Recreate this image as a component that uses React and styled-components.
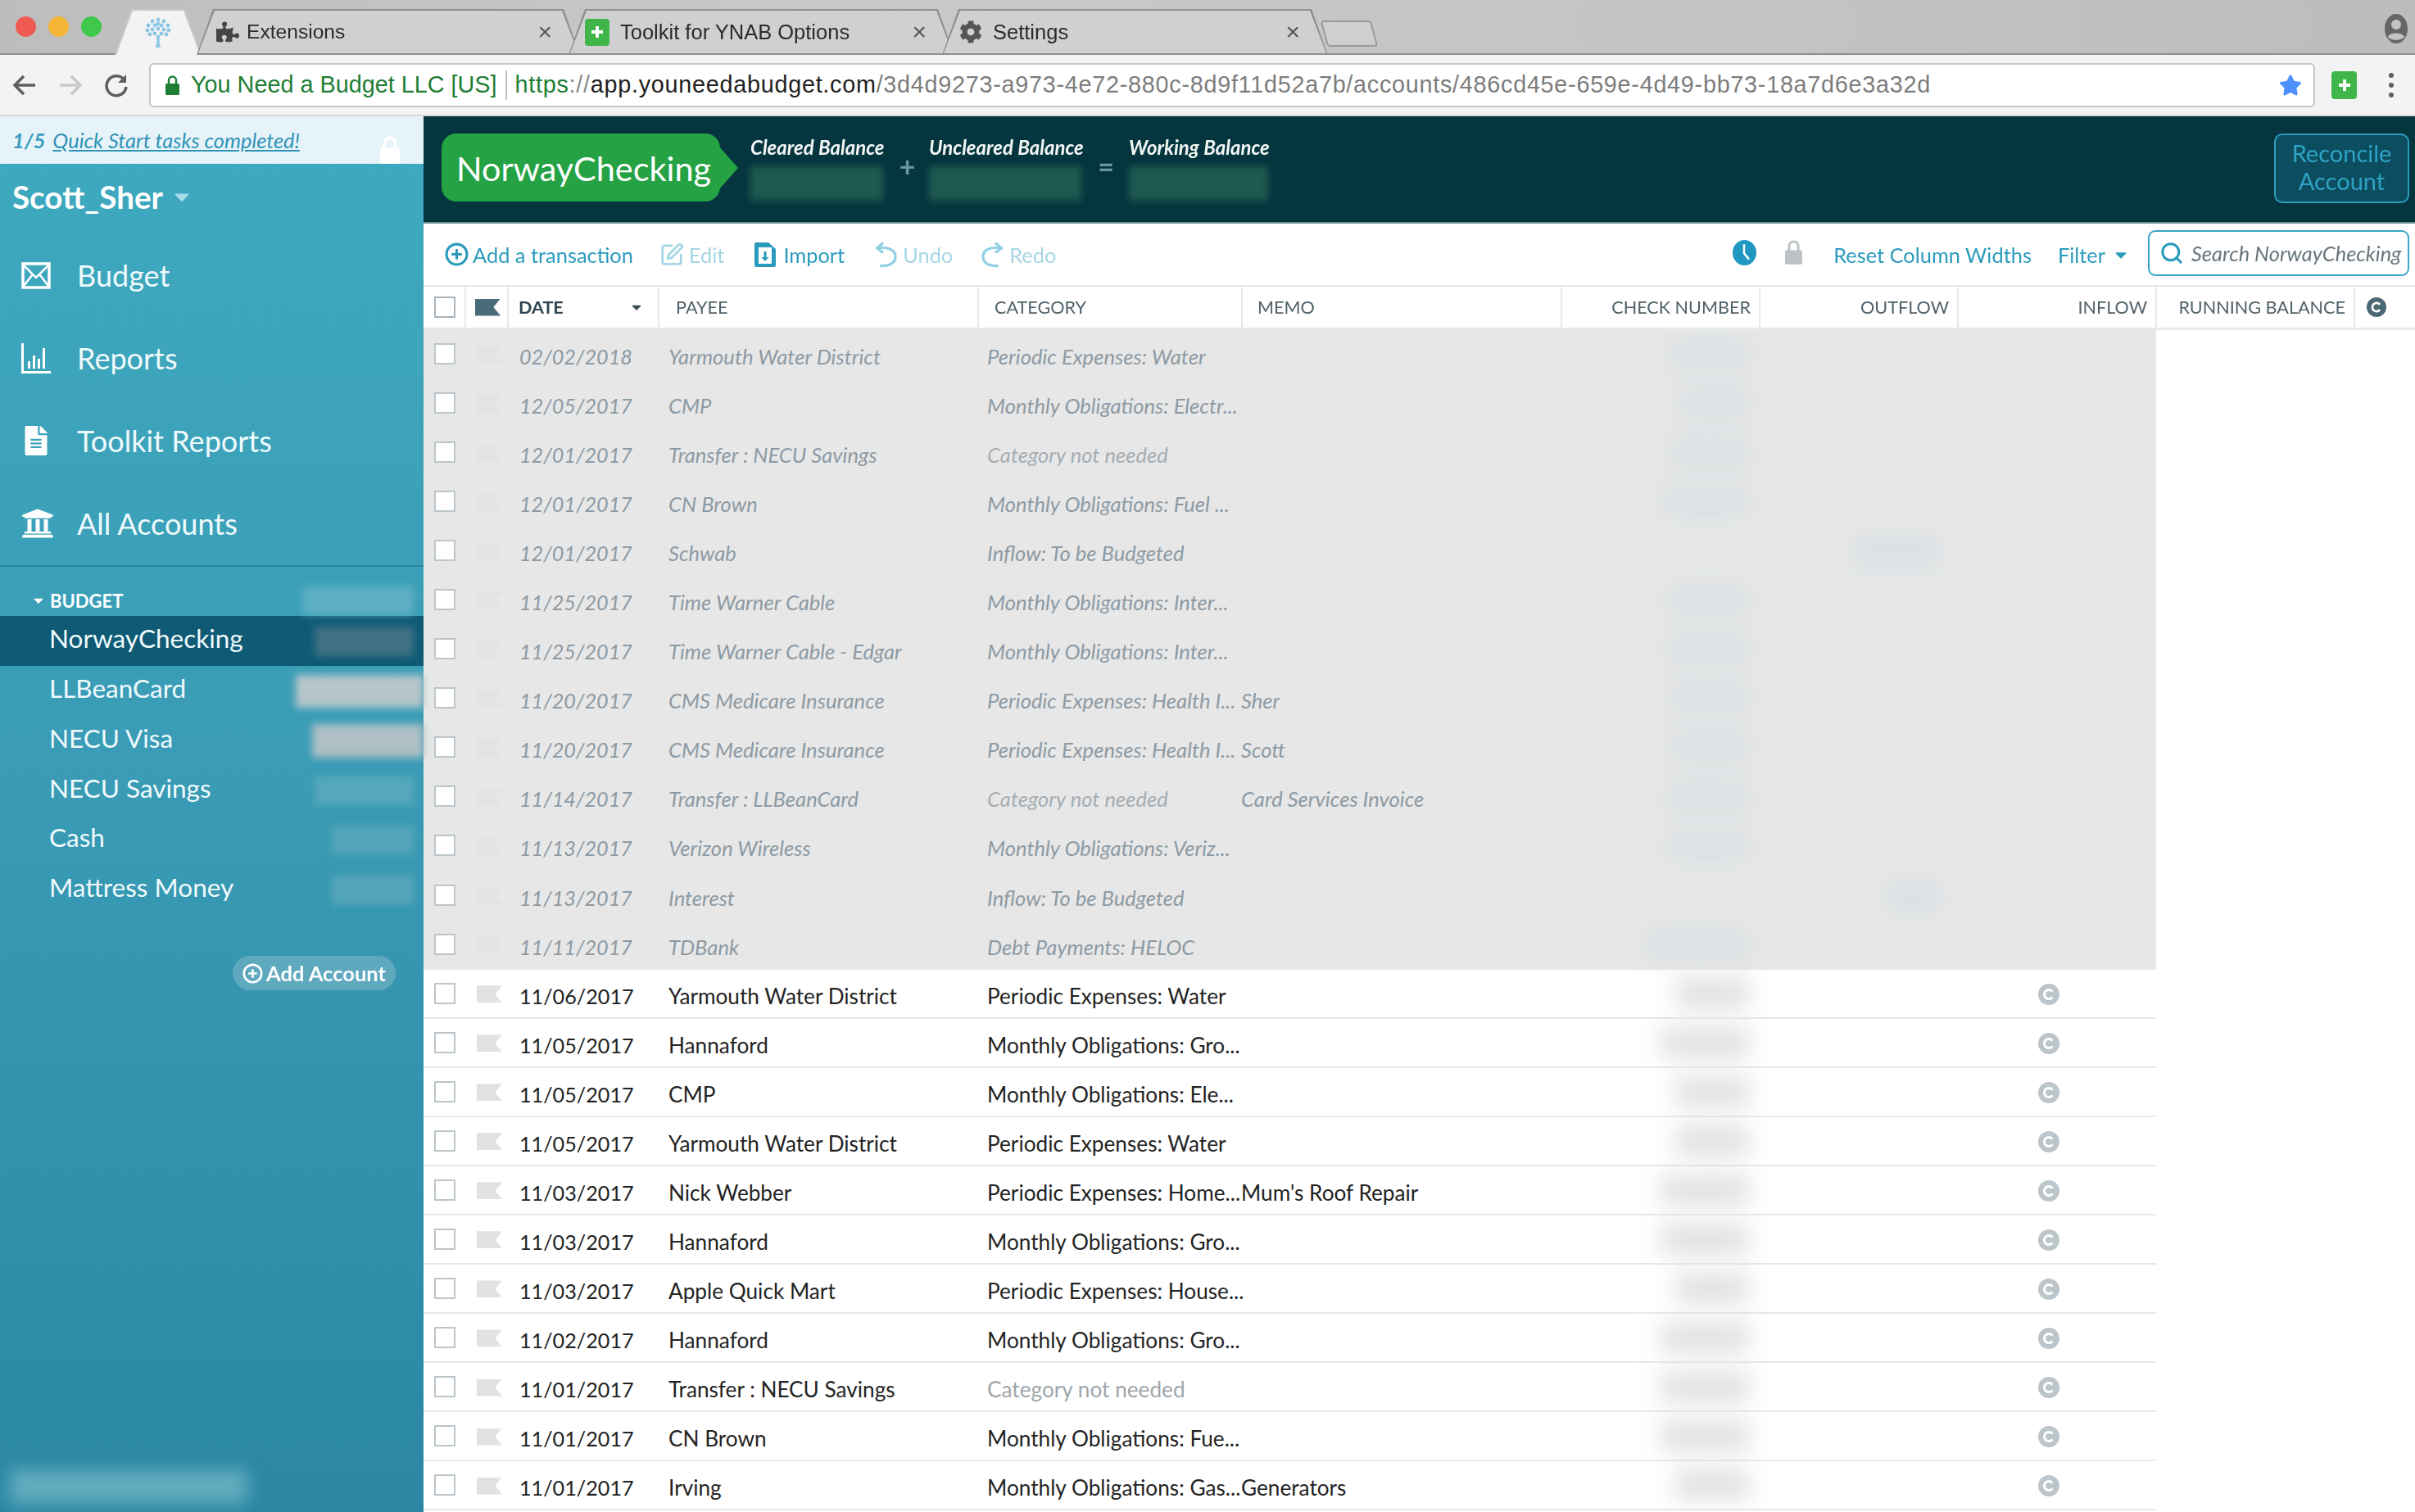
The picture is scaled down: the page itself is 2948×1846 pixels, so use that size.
import React from 'react';
import styled, { createGlobalStyle } from 'styled-components';
import { FaPuzzlePiece, FaCog, FaUniversity, FaStar, FaFileAlt, FaCaretDown } from 'react-icons/fa';
import { Search, SquarePen } from 'lucide-react';

const GlobalStyle = createGlobalStyle`
  html, body {
    margin: 0;
    padding: 0;
    width: 2948px;
    height: 1846px;
    overflow: hidden;
    background: #ffffff;
    font-family: Lato, "Open Sans", sans-serif;
  }
  * { box-sizing: border-box; }
`;

const Page = styled.div`
  width: 2948px;
  height: 1846px;
  display: flex;
  flex-direction: column;
  overflow: hidden;
  filter: blur(0.6px);
`;

/* browser chrome */
const TabStrip = styled.div`
  height: 67px;
  flex: none;
  display: flex;
  align-items: flex-end;
  padding-left: 140px;
  background: linear-gradient(90deg, #bdbdbd 0%, #c9c9c9 35%, #c4c4c4 70%, #bcbcbc 100%);
  border-bottom: 2px solid #8e8e8e;
  position: relative;
`;

const Lights = styled.div`
  position: absolute;
  left: 19px;
  top: 20px;
  display: flex;
  gap: 15px;
`;

const Light = styled.span`
  width: 25px;
  height: 25px;
  border-radius: 50%;
  background: ${({ $color }) => $color};
`;

const TabShell = styled.div`
  width: ${({ $width }) => $width}px;
  height: 56px;
  margin-left: ${({ $overlap }) => $overlap || 0}px;
  margin-bottom: -2px;
  flex: none;
  background: ${({ $active }) => ($active ? '#c8c8c8' : '#8e8e8e')};
  clip-path: polygon(0 100%, 20px 0, calc(100% - 20px) 0, 100% 100%);
  padding: 2px 2px 0;
`;

const TabFace = styled.div`
  width: 100%;
  height: 100%;
  display: flex;
  align-items: center;
  padding: 0 32px 0 ${({ $pad }) => $pad || 22}px;
  background: ${({ $active }) => ($active ? '#f3f3f3' : '#d0d0d0')};
  clip-path: polygon(0 100%, 20px 0, calc(100% - 20px) 0, 100% 100%);
  ${({ $active }) => !$active && 'height: calc(100% - 2px);'}
`;

const TabTitle = styled.span`
  flex: 1;
  margin-left: ${({ $gap }) => $gap || 13}px;
  font: ${({ $size }) => $size || 25.5}px "Liberation Sans", Arial, sans-serif;
  color: #2b2b2b;
  white-space: nowrap;
`;

const TabClose = styled.span`
  font: 30px "Liberation Sans", Arial, sans-serif;
  color: #555555;
`;

const NewTab = styled.div`
  width: 62px;
  height: 32px;
  margin-left: -5px;
  margin-bottom: 8px;
  flex: none;
  background: #cfcfcf;
  border: 2px solid #9a9a9a;
  border-radius: 4px;
  transform: skewX(15deg);
`;

const Profile = styled.div`
  position: absolute;
  right: 8px;
  top: 16px;
  color: #666666;
  line-height: 0;
`;

const PlusBadge = styled.span`
  width: ${({ $size }) => $size}px;
  height: ${({ $size }) => $size + 3}px;
  flex: none;
  display: inline-flex;
  align-items: center;
  justify-content: center;
  background: #3fb54a;
  border-radius: 4px;
`;

const AddressRow = styled.div`
  height: 75px;
  flex: none;
  display: flex;
  align-items: center;
  background: #f3f3f3;
  border-bottom: 2px solid #d8d8d8;
  padding: 0 0 0 15px;
`;

const NavArrows = styled.div`
  width: 167px;
  flex: none;
  display: flex;
  gap: 26px;
  align-items: center;
  line-height: 0;
`;

const Omnibox = styled.div`
  width: 2644px;
  height: 54px;
  flex: none;
  display: flex;
  align-items: center;
  padding: 0 14px 0 18px;
  background: #ffffff;
  border: 2px solid #c6c6c6;
  border-radius: 6px;
  font: 28.8px "Liberation Sans", Arial, sans-serif;
  white-space: nowrap;
`;

const SiteName = styled.span`
  margin-left: 14px;
  color: #1e7e34;
`;

const UrlPart = styled.span`
  color: ${({ $color }) => $color};
  letter-spacing: 0.72px;
`;

const OmniDivider = styled.span`
  width: 2px;
  height: 36px;
  margin: 0 10px;
  background: #c4c4c4;
`;

const ToolbarEnd = styled.div`
  flex: 1;
  display: flex;
  align-items: center;
  gap: 39px;
  padding-left: 20px;
`;

const Kebab = styled.span`
  display: flex;
  flex-direction: column;
  gap: 6px;

  i {
    width: 6px;
    height: 6px;
    border-radius: 50%;
    background: #5e5e5e;
  }
`;

/* app shell */
const AppBody = styled.div`
  flex: 1;
  min-height: 0;
  display: flex;
`;

const Sidebar = styled.aside`
  width: 517px;
  flex: none;
  display: flex;
  flex-direction: column;
  background: linear-gradient(180deg, #3eaabf 0%, #3a9cb6 45%, #2b87a4 100%);
  color: #ffffff;
`;

const QuickStart = styled.div`
  height: 58px;
  flex: none;
  display: flex;
  align-items: center;
  padding-left: 15px;
  position: relative;
  background: #e6f4f9;
  font: italic 700 25.4px Lato, sans-serif;
  color: #3b9cc0;
`;

const QuickLink = styled.a`
  margin-left: 9px;
  color: #2f93b8;
  font-weight: 400;
  text-decoration: underline;
`;

const QuickLock = styled.span`
  position: absolute;
  left: 464px;
  top: 24px;
  line-height: 0;
`;

const BudgetName = styled.div`
  height: 86px;
  flex: none;
  display: flex;
  align-items: center;
  gap: 9px;
  padding: 0 0 6px 15px;
  font: 700 38.6px Lato, sans-serif;

  svg {
    color: #a8dbe8;
  }
`;

const MainNav = styled.nav`
  flex: none;
  padding-bottom: 1px;
  border-bottom: 2px solid rgba(20, 90, 115, 0.35);
`;

const NavItem = styled.div`
  height: 100.8px;
  display: flex;
  align-items: center;
  padding-left: 26px;
  font: 36px Lato, sans-serif;
  color: #eefafc;
`;

const NavIcon = styled.span`
  width: 68px;
  flex: none;
  line-height: 0;
`;

const AccountHeader = styled.div`
  height: 60px;
  flex: none;
  display: flex;
  align-items: center;
  padding: 22px 12px 0 38px;
  font: 700 22px Lato, sans-serif;

  svg {
    margin-right: 5px;
  }
`;

const AccountRow = styled.div`
  height: ${({ $selected }) => ($selected ? 61 : 60.8)}px;
  flex: none;
  display: flex;
  align-items: center;
  justify-content: space-between;
  padding: 0 ${({ $end }) => $end}px 0 60px;
  font: 31.5px Lato, sans-serif;
  color: #f0fafc;
  background: ${({ $selected }) => ($selected ? '#0f5a75' : 'transparent')};
`;

const AccountName = styled.span`
  margin-bottom: 7px;
`;

const Smudge = styled.span`
  display: block;
  flex: none;
  width: ${({ $w }) => $w}px;
  height: ${({ $h }) => $h || 34}px;
  margin-left: ${({ $left }) => $left || 0}px;
  background: ${({ $color }) => $color};
  filter: blur(${({ $blur }) => $blur || 5}px);
`;

const AddAccount = styled.button`
  align-self: flex-end;
  width: 199px;
  height: 42px;
  margin: 50px 34px 0 0;
  padding: 0;
  display: flex;
  align-items: center;
  justify-content: center;
  gap: 4px;
  border: 0;
  border-radius: 21px;
  background: #5fa9bf;
  color: #ffffff;
  font: 700 25.5px Lato, sans-serif;
`;

const SidebarFooter = styled.div`
  margin-top: auto;
  padding: 0 0 10px 12px;
`;

const Content = styled.main`
  flex: 1;
  min-width: 0;
  display: flex;
  flex-direction: column;
`;

const AccountHead = styled.header`
  height: 131px;
  flex: none;
  display: flex;
  align-items: flex-start;
  padding: 21px 7px 0 22px;
  background: #05353f;
  border-bottom: 2px solid #6b8f97;
`;

const AccountPill = styled.div`
  width: 340px;
  height: 83px;
  flex: none;
  position: relative;
  display: flex;
  align-items: center;
  padding-left: 18px;
  margin-right: 37px;
  background: #25a244;
  border-radius: 18px;
  color: #ffffff;
  font: 41.4px Lato, sans-serif;
  white-space: nowrap;

  &::after {
    content: '';
    position: absolute;
    right: -22px;
    top: 16px;
    border-left: 23px solid #25a244;
    border-top: 26px solid transparent;
    border-bottom: 26px solid transparent;
  }
`;

const Balance = styled.div`
  width: ${({ $w }) => $w}px;
  flex: none;
  display: flex;
  flex-direction: column;
  gap: 7px;
  padding-top: 1px;
`;

const BalanceLabel = styled.div`
  font: italic 700 24px/32px Lato, sans-serif;
  color: #f2f7f5;
  white-space: nowrap;
`;

const BalanceOp = styled.div`
  width: ${({ $w }) => $w}px;
  flex: none;
  padding-top: 19px;
  text-align: center;
  font: 700 34px Lato, sans-serif;
  color: #6c95a6;
`;

const Reconcile = styled.button`
  width: 165px;
  height: 85px;
  margin-left: auto;
  padding: 0 0 3px;
  background: #0d4d60;
  border: 2px solid #2a9dbd;
  border-radius: 10px;
  color: #2ea3c4;
  font: 29px/34px Lato, sans-serif;
`;

const ActionBar = styled.div`
  height: 75px;
  flex: none;
  display: flex;
  align-items: center;
  padding: 0 7px 0 26px;
`;

const Action = styled.span`
  display: flex;
  align-items: center;
  gap: ${({ $gap }) => $gap || 6}px;
  margin-right: ${({ $mr }) => $mr || 0}px;
  font: 25.4px Lato, sans-serif;
  color: ${({ $dim }) => ($dim ? '#a6d6e4' : '#2b9bbd')};
  white-space: nowrap;
  line-height: 0;

  span {
    line-height: 34px;
  }
`;

const ActionIcon = styled.span`
  margin-right: ${({ $mr }) => $mr || 0}px;
  margin-top: -5px;
  line-height: 0;
`;

const MirroredIcon = styled.svg`
  transform: ${({ $flip }) => ($flip ? 'scaleX(-1)' : 'none')};
`;

const SearchBox = styled.div`
  width: 319px;
  height: 56px;
  flex: none;
  display: flex;
  align-items: center;
  gap: 9px;
  margin-top: -4px;
  padding-left: 12px;
  border: 2px solid #3aa5c5;
  border-radius: 9px;
  font: italic 25.4px Lato, sans-serif;
  color: #67757c;
  white-space: nowrap;

  svg {
    color: #2b9bbd;
    flex: none;
  }
`;

const Spacer = styled.span`
  flex: 1;
`;

const HeadRow = styled.div`
  height: 55px;
  flex: none;
  display: grid;
  grid-template-columns: 52px 52px 184px 390px 322px 390px 242px 242px 242px 242px 73px;
  border-top: 2px solid #e4e9ed;
  border-bottom: 3px solid #e6eaec;
`;

const HeadCell = styled.div`
  display: flex;
  align-items: center;
  justify-content: ${({ $right }) => ($right ? 'flex-end' : 'flex-start')};
  padding: 0 ${({ $right }) => ($right ? 10 : 8)}px 0 ${({ $pad }) => $pad ?? 18}px;
  border-right: ${({ $last }) => ($last ? 0 : '2px solid #e4e9ed')};
  font: ${({ $strong }) => ($strong ? 700 : 400)} 21.6px Lato, sans-serif;
  color: ${({ $strong }) => ($strong ? '#2e4651' : '#52626a')};
  white-space: nowrap;
`;

const Check = styled.span`
  width: 26px;
  height: 26px;
  flex: none;
  margin-left: 13px;
  background: #ffffff;
  border: 2px solid ${({ $dark }) => ($dark ? '#aab4ba' : '#bcc5ca')};
`;

const FlagShape = styled.span`
  width: 31px;
  height: 21px;
  flex: none;
  display: block;
  margin: ${({ $drop }) => $drop || 0}px 0 0 ${({ $left }) => $left}px;
  background: ${({ $color }) => $color};
  clip-path: polygon(0 0, 100% 0, 72% 50%, 100% 100%, 0 100%);
`;

const SortCaret = styled.span`
  margin-left: auto;
  margin-right: 9px;
  color: #3b4d55;
  line-height: 0;
`;

const Rows = styled.div`
  flex: 1;
  min-height: 0;
  width: 2115px;
  overflow: hidden;
`;

const Row = styled.div`
  height: 60.05px;
  display: grid;
  grid-template-columns: 52px 61px 182px 389px 310px 396px 242px 1fr;
  align-items: center;
  background: ${({ $future }) => ($future ? '#e7e7e7' : '#ffffff')};
  border-bottom: 2px solid #e4e9ee;
  font: ${({ $future }) => ($future ? 'italic 25.6px' : 'normal 26.2px')} Lato, sans-serif;
  color: ${({ $future }) => ($future ? '#8d9aa4' : '#232323')};
`;

const Cell = styled.div`
  padding: 6px 0 0 4px;
  white-space: nowrap;
  color: ${({ $muted, $future }) => ($muted ? ($future ? '#a5adb3' : '#9ea5a9') : 'inherit')};
`;

const DateCell = styled(Cell)`
  font-size: 25.2px;
`;

const BoxCell = styled.div`
  display: flex;
  align-items: center;
`;

const AmountCell = styled.div`
  display: flex;
  align-items: center;
  justify-content: flex-end;
  padding-right: ${({ $end }) => $end}px;
`;

const InflowCell = styled.div`
  display: flex;
  align-items: center;
  padding: 2px 0 0 ${({ $pad }) => $pad || 0}px;
  line-height: 0;
`;

const Plus = () => (
  <svg width="18" height="18" viewBox="0 0 18 18">
    <path d="M9 2v14M2 9h14" stroke="#fff" strokeWidth="4" />
  </svg>
);

const Cleared = ({ size = 26, color = '#bcc5c9' }) => (
  <svg width={size} height={size} viewBox="0 0 26 26">
    <circle cx="13" cy="13" r="13" fill={color} />
    <path d="M17.5 9.6a5.6 5.6 0 1 0 0 6.8" fill="none" stroke="#fff" strokeWidth="3" />
  </svg>
);

const TreeLogo = () => (
  <svg width="32" height="38" viewBox="0 0 32 38" fill="#8cc5e6">
    {[[16, 3], [9, 5], [23, 5], [4, 10], [28, 10], [12, 10], [20, 10], [16, 8], [3, 16], [29, 16], [9, 15], [23, 15], [16, 14], [6, 21], [26, 21], [12, 20], [20, 20]].map(([x, y]) => (
      <circle key={`${x}-${y}`} cx={x} cy={y} r="2.4" />
    ))}
    <path d="M14 22h4l-.5 8 1.5 7h-6l1.500-7z" />
  </svg>
);

const ProfileIcon = () => (
  <svg width="30" height="38" viewBox="0 0 30 38">
    <ellipse cx="15" cy="19" rx="14" ry="18" fill="#666" />
    <circle cx="15" cy="14" r="6" fill="#c4c4c4" />
    <path d="M5 29c2-6 18-6 20 0-3 5-17 5-20 0z" fill="#c4c4c4" />
  </svg>
);

const BackArrow = ({ color }) => (
  <svg width="30" height="30" viewBox="0 0 30 30" fill="none" stroke={color} strokeWidth="3.5">
    <path d="M28 15H4M14 4 3 15l11 11" />
  </svg>
);

const ForwardArrow = ({ color }) => (
  <svg width="30" height="30" viewBox="0 0 30 30" fill="none" stroke={color} strokeWidth="3.5">
    <path d="M2 15h24M16 4l11 11-11 11" />
  </svg>
);

const Reload = () => (
  <svg width="30" height="32" viewBox="0 0 30 32" fill="none" stroke="#5e5e5e" strokeWidth="3.5">
    <path d="M25 10a12 12 0 1 0 2 8" />
    <path d="M27 3v10H17z" fill="#5e5e5e" stroke="none" />
  </svg>
);

const Padlock = ({ color = '#1e7e34', width = 17, height = 24 }) => (
  <svg width={width} height={height} viewBox="0 0 17 24">
    <path d="M4 11V6a4.500 4.500 0 0 1 9 0v5" fill="none" stroke={color} strokeWidth="2.500" />
    <rect x="0" y="10" width="17" height="14" rx="1.500" fill={color} />
  </svg>
);

const Envelope = () => (
  <svg width="36" height="33" viewBox="0 0 36 33" fill="none" stroke="#fff" strokeWidth="3.500">
    <rect x="2" y="2" width="32" height="29" />
    <path d="M3 4l15 15L33 4M3 29l10-13M33 29 23 16" strokeWidth="2.500" />
  </svg>
);

const Bars = () => (
  <svg width="36" height="37" viewBox="0 0 36 37" fill="#fff">
    <path d="M0 0h3v34h33v3H0z" />
    <rect x="8" y="22" width="3" height="9" />
    <rect x="14" y="15" width="3" height="16" />
    <rect x="20" y="19" width="3" height="12" />
    <rect x="26" y="6" width="3" height="25" />
  </svg>
);

const AddCircle = ({ size, color }) => (
  <svg width={size} height={size} viewBox="0 0 28 28" fill="none" stroke={color} strokeWidth="3">
    <circle cx="14" cy="14" r="12" />
    <path d="M14 8v12M8 14h12" />
  </svg>
);

const ImportDoc = () => (
  <svg width="26" height="30" viewBox="0 0 26 30">
    <path d="M2 0h15l9 8v20a2 2 0 0 1-2 2H2a2 2 0 0 1-2-2V2a2 2 0 0 1 2-2z" fill="#2b9bbd" />
    <rect x="5" y="6" width="16" height="20" fill="#fff" />
    <path d="M11.500 11h3v7h3l-4.500 5-4.500-5h3z" fill="#2b9bbd" />
  </svg>
);

// the same sweep for undo and, flipped, for redo
const HistoryArrow = ({ flip }) => (
  <MirroredIcon $flip={flip} width="29" height="32" viewBox="0 0 29 32" fill="none" stroke="#8fd0e2" strokeWidth="3.2">
    <path d="M11 1.500 3.500 8 11 13.500" />
    <path d="M4 8c10-1.500 22 0 22 10.500 0 9-10 12-19 11" />
  </MirroredIcon>
);

const Clock = () => (
  <svg width="29" height="31" viewBox="0 0 29 29" preserveAspectRatio="none">
    <circle cx="14.500" cy="14.500" r="14.500" fill="#1f97c0" />
    <path d="M14 5v10l6 7" fill="none" stroke="#fff" strokeWidth="2.500" />
  </svg>
);

const ACCOUNTS = [
  { name: 'NorwayChecking', selected: true, w: 121, color: '#3f7285', h: 36, end: 12 },
  { name: 'LLBeanCard', w: 156, color: '#b7c6ca', h: 40, end: 0 },
  { name: 'NECU Visa', w: 136, color: '#aebfc5', h: 41, end: 0 },
  { name: 'NECU Savings', w: 121, color: '#56a8ba', h: 35, end: 12 },
  { name: 'Cash', w: 100, color: '#54a6b8', h: 35, end: 12 },
  { name: 'Mattress Money', w: 100, color: '#56a6b9', h: 35, end: 12 },
];

const FUTURE = [
  ['02/02/2018', 'Yarmouth Water District', 'Periodic Expenses: Water', '', 96],
  ['12/05/2017', 'CMP', 'Monthly Obligations: Electr...', '', 86],
  ['12/01/2017', 'Transfer : NECU Savings', 'Category not needed', '', 96],
  ['12/01/2017', 'CN Brown', 'Monthly Obligations: Fuel ...', '', 106],
  ['12/01/2017', 'Schwab', 'Inflow: To be Budgeted', '', 0, 111, 110],
  ['11/25/2017', 'Time Warner Cable', 'Monthly Obligations: Inter...', '', 100],
  ['11/25/2017', 'Time Warner Cable - Edgar', 'Monthly Obligations: Inter...', '', 100],
  ['11/20/2017', 'CMS Medicare Insurance', 'Periodic Expenses: Health I...', 'Sher', 96],
  ['11/20/2017', 'CMS Medicare Insurance', 'Periodic Expenses: Health I...', 'Scott', 96],
  ['11/14/2017', 'Transfer : LLBeanCard', 'Category not needed', 'Card Services Invoice', 100],
  ['11/13/2017', 'Verizon Wireless', 'Monthly Obligations: Veriz...', '', 100],
  ['11/13/2017', 'Interest', 'Inflow: To be Budgeted', '', 0, 151, 70],
  ['11/11/2017', 'TDBank', 'Debt Payments: HELOC', '', 126],
];

const CLEARED = [
  ['11/06/2017', 'Yarmouth Water District', 'Periodic Expenses: Water', '', 90],
  ['11/05/2017', 'Hannaford', 'Monthly Obligations: Gro...', '', 108],
  ['11/05/2017', 'CMP', 'Monthly Obligations: Ele...', '', 90],
  ['11/05/2017', 'Yarmouth Water District', 'Periodic Expenses: Water', '', 90],
  ['11/03/2017', 'Nick Webber', 'Periodic Expenses: Home...', "Mum's Roof Repair", 108],
  ['11/03/2017', 'Hannaford', 'Monthly Obligations: Gro...', '', 108],
  ['11/03/2017', 'Apple Quick Mart', 'Periodic Expenses: House...', '', 90],
  ['11/02/2017', 'Hannaford', 'Monthly Obligations: Gro...', '', 108],
  ['11/01/2017', 'Transfer : NECU Savings', 'Category not needed', '', 108],
  ['11/01/2017', 'CN Brown', 'Monthly Obligations: Fue...', '', 108],
  ['11/01/2017', 'Irving', 'Monthly Obligations: Gas...', 'Generators', 90],
];

function TransactionRow({ row, future }) {
  const [date, payee, category, memo, check, inflowLeft, inflowWidth] = row;
  const muted = category === 'Category not needed';
  return (
    <Row $future={future}>
      <BoxCell><Check /></BoxCell>
      <BoxCell><FlagShape $left={13} $drop={2} $color={future ? '#e3e3e3' : '#e2e2e2'} /></BoxCell>
      <DateCell>{date}</DateCell>
      <Cell>{payee}</Cell>
      <Cell $muted={muted} $future={future}>{category}</Cell>
      <Cell>{memo}</Cell>
      <AmountCell $end={14}>
        {check > 0 && <Smudge $w={check} $h={36} $blur={14} $color={future ? '#dae0e3' : '#e0e0e0'} />}
      </AmountCell>
      <InflowCell $pad={future ? 0 : 339}>
        {inflowWidth && <Smudge $left={inflowLeft} $w={inflowWidth} $h={36} $blur={12} $color="#dae0e3" />}
        {!future && <Cleared />}
      </InflowCell>
    </Row>
  );
}

export default function App() {
  return (
    <Page>
      <GlobalStyle />
      <TabStrip>
        <Lights>
          <Light $color="#ee5a52" />
          <Light $color="#f5b638" />
          <Light $color="#3fc84a" />
        </Lights>
        <TabShell $active $width={106}>
          <TabFace $active $pad={35}><TreeLogo /></TabFace>
        </TabShell>
        <TabShell $width={468} $overlap={-6}>
          <TabFace $pad={22}>
            <FaPuzzlePiece size={28} color="#454545" />
            <TabTitle $gap={9} $size={24.6}>Extensions</TabTitle>
            <TabClose>×</TabClose>
          </TabFace>
        </TabShell>
        <TabShell $width={471} $overlap={-14}>
          <TabFace $pad={18}>
            <PlusBadge $size={30}><Plus /></PlusBadge>
            <TabTitle>Toolkit for YNAB Options</TabTitle>
            <TabClose>×</TabClose>
          </TabFace>
        </TabShell>
        <TabShell $width={471} $overlap={-15}>
          <TabFace $pad={19}>
            <FaCog size={28} color="#555555" />
            <TabTitle>Settings</TabTitle>
            <TabClose>×</TabClose>
          </TabFace>
        </TabShell>
        <NewTab />
        <Profile><ProfileIcon /></Profile>
      </TabStrip>

      <AddressRow>
        <NavArrows>
          <BackArrow color="#5e5e5e" />
          <ForwardArrow color="#c9c9c9" />
          <Reload />
        </NavArrows>
        <Omnibox>
          <Padlock />
          <SiteName>You Need a Budget LLC [US]</SiteName>
          <OmniDivider />
          <UrlPart $color="#1e7e34">https</UrlPart>
          <UrlPart $color="#8a8a8a">://</UrlPart>
          <UrlPart $color="#222222">app.youneedabudget.com</UrlPart>
          <UrlPart $color="#7d7d7d">/3d4d9273-a973-4e72-880c-8d9f11d52a7b/accounts/486cd45e-659e-4d49-bb73-18a7d6e3a32d</UrlPart>
          <Spacer />
          <FaStar size={28} color="#4d90fe" />
        </Omnibox>
        <ToolbarEnd>
          <PlusBadge $size={31}><Plus /></PlusBadge>
          <Kebab><i /><i /><i /></Kebab>
        </ToolbarEnd>
      </AddressRow>

      <AppBody>
        <Sidebar>
          <QuickStart>
            1/5
            <QuickLink>Quick Start tasks completed!</QuickLink>
            <QuickLock><Padlock color="#ffffff" width={24} height={34} /></QuickLock>
          </QuickStart>
          <BudgetName>
            Scott_Sher
            <FaCaretDown size={28} />
          </BudgetName>
          <MainNav>
            <NavItem><NavIcon><Envelope /></NavIcon>Budget</NavItem>
            <NavItem><NavIcon><Bars /></NavIcon>Reports</NavItem>
            <NavItem><NavIcon><FaFileAlt size={36} color="#ffffff" /></NavIcon>Toolkit Reports</NavItem>
            <NavItem><NavIcon><FaUniversity size={40} color="#ffffff" /></NavIcon>All Accounts</NavItem>
          </MainNav>
          <AccountHeader>
            <FaCaretDown size={18} />
            BUDGET
            <Spacer />
            <Smudge $w={135} $h={34} $color="#5fb0c2" />
          </AccountHeader>
          {ACCOUNTS.map((account) => (
            <AccountRow key={account.name} $selected={account.selected} $end={account.end}>
              <AccountName>{account.name}</AccountName>
              <Smudge $w={account.w} $h={account.h} $color={account.color} />
            </AccountRow>
          ))}
          <AddAccount>
            <AddCircle size={25} color="#ffffff" />
            Add Account
          </AddAccount>
          <SidebarFooter>
            <Smudge $w={290} $h={42} $blur={10} $color="#63abbd" />
          </SidebarFooter>
        </Sidebar>

        <Content>
          <AccountHead>
            <AccountPill>NorwayChecking</AccountPill>
            <Balance $w={165}>
              <BalanceLabel>Cleared Balance</BalanceLabel>
              <Smudge $w={162} $h={42} $blur={4} $color="#1f5a50" />
            </Balance>
            <BalanceOp $w={53}>+</BalanceOp>
            <Balance $w={188}>
              <BalanceLabel>Uncleared Balance</BalanceLabel>
              <Smudge $w={186} $h={42} $blur={4} $color="#1f5a50" />
            </Balance>
            <BalanceOp $w={56}>=</BalanceOp>
            <Balance $w={171}>
              <BalanceLabel>Working Balance</BalanceLabel>
              <Smudge $w={170} $h={42} $blur={4} $color="#1f5a50" />
            </Balance>
            <Reconcile>Reconcile<br />Account</Reconcile>
          </AccountHead>

          <ActionBar>
            <Action $mr={32} $gap={5}>
              <AddCircle size={29} color="#2b9bbd" />
              <span>Add a transaction</span>
            </Action>
            <Action $dim $mr={37} $gap={6}>
              <SquarePen size={30} strokeWidth={2.2} />
              <span>Edit</span>
            </Action>
            <Action $mr={36} $gap={9}>
              <ImportDoc />
              <span>Import</span>
            </Action>
            <Action $dim $mr={34} $gap={6}>
              <HistoryArrow />
              <span>Undo</span>
            </Action>
            <Action $dim $gap={6}>
              <HistoryArrow flip />
              <span>Redo</span>
            </Action>
            <Spacer />
            <ActionIcon $mr={35}><Clock /></ActionIcon>
            <ActionIcon $mr={38}><Padlock color="#bcc2c5" width={21} height={30} /></ActionIcon>
            <Action $mr={32}><span>Reset Column Widths</span></Action>
            <Action $mr={22} $gap={8}>
              <span>Filter</span>
              <FaCaretDown size={22} />
            </Action>
            <SearchBox>
              <Search size={30} strokeWidth={2.4} />
              Search NorwayChecking
            </SearchBox>
          </ActionBar>

          <HeadRow>
            <HeadCell $pad={0}><Check $dark /></HeadCell>
            <HeadCell $pad={11}><FlagShape $left={0} $color="#4a6b7a" /></HeadCell>
            <HeadCell $strong $pad={12}>
              DATE
              <SortCaret><FaCaretDown size={18} /></SortCaret>
            </HeadCell>
            <HeadCell $pad={20}>PAYEE</HeadCell>
            <HeadCell $pad={19}>CATEGORY</HeadCell>
            <HeadCell $pad={18}>MEMO</HeadCell>
            <HeadCell $right>CHECK NUMBER</HeadCell>
            <HeadCell $right>OUTFLOW</HeadCell>
            <HeadCell $right>INFLOW</HeadCell>
            <HeadCell $right>RUNNING BALANCE</HeadCell>
            <HeadCell $last $pad={14}><Cleared size={24} color="#4c6874" /></HeadCell>
          </HeadRow>

          <Rows>
            {FUTURE.map((row, i) => <TransactionRow key={i} row={row} future />)}
            {CLEARED.map((row, i) => <TransactionRow key={i} row={row} />)}
          </Rows>
        </Content>
      </AppBody>
    </Page>
  );
}
